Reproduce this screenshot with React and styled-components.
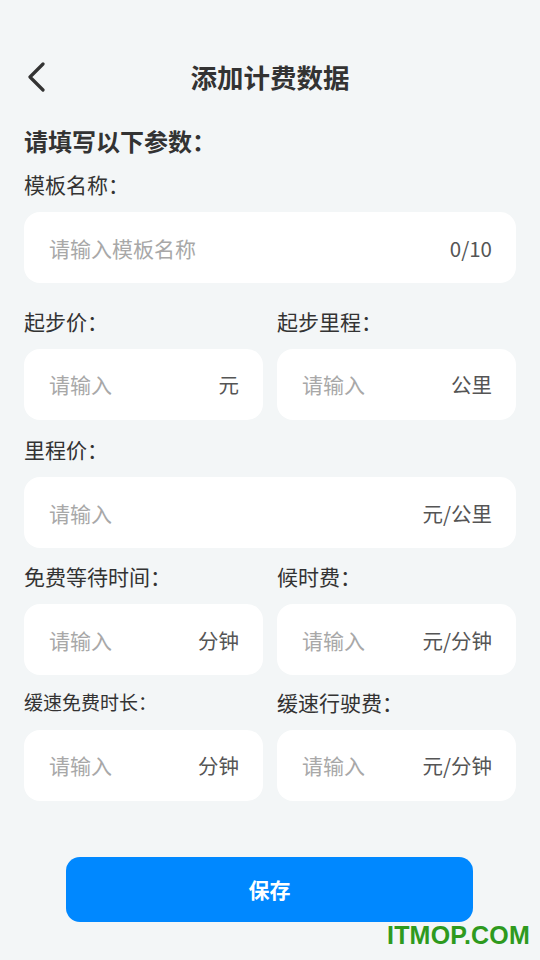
import React from "react";
import styled, { createGlobalStyle } from "styled-components";

const GlobalStyle = createGlobalStyle`
  html, body {
    margin: 0;
    padding: 0;
    background: #f3f6f7;
  }
  body {
    font-family: "Noto Sans CJK SC", "Noto Sans", sans-serif;
    color: #333;
  }
`;

const Page = styled.div`
  position: relative;
  width: 540px;
  height: 960px;
  box-sizing: border-box;
  padding: 49px 24px 0;
  background: #f3f6f7;
  overflow: hidden;
`;

const Header = styled.div`
  display: grid;
  grid-template-columns: 48px 1fr 48px;
  align-items: center;
  height: 56px;
`;

const Back = styled.button`
  display: flex;
  align-items: center;
  padding: 0 0 0 2px;
  border: none;
  background: none;
  cursor: pointer;
`;

const Title = styled.h1`
  margin: 0;
  text-align: center;
  font-size: 26.5px;
  font-weight: 700;
  color: #333;
  line-height: 56px;
`;

const Intro = styled.h2`
  margin: 20px 0 0;
  font-size: 24px;
  line-height: 32px;
  font-weight: 700;
  color: #333;
`;

const Row = styled.div`
  display: grid;
  grid-template-columns: ${(p) => (p.split ? "repeat(2, minmax(0, 1fr))" : "minmax(0, 1fr)")};
  column-gap: 14px;
  margin-top: ${(p) => p.top}px;
`;

const Field = styled.div`
  display: flex;
  flex-direction: column;
  min-width: 0;
`;

const Label = styled.label`
  font-size: ${(p) => (p.small ? 19 : 21)}px;
  line-height: 28px;
  color: #333;
  margin-bottom: 14px;
`;

const Box = styled.div`
  display: flex;
  align-items: center;
  gap: 8px;
  height: 71px;
  box-sizing: border-box;
  padding: 0 24px 0 25px;
  background: #fff;
  border-radius: 16px;
`;

const Input = styled.input`
  flex: 1;
  width: 0;
  min-width: 0;
  border: none;
  outline: none;
  background: transparent;
  padding: 0;
  font-family: inherit;
  font-size: 21px;
  color: #333;
  &::placeholder {
    color: #a8a8a8;
  }
`;

const Unit = styled.span`
  font-size: 20.5px;
  color: #555;
  white-space: nowrap;
`;

const SaveButton = styled.button`
  display: block;
  width: 407px;
  height: 65px;
  margin: 56px 0 0 42px;
  border: none;
  border-radius: 14px;
  background: #0088ff;
  color: #fff;
  font-family: inherit;
  font-size: 21px;
  font-weight: 700;
  cursor: pointer;
`;

const Watermark = styled.div`
  position: absolute;
  right: 10px;
  bottom: 10px;
  font-family: "Liberation Sans", Arial, sans-serif;
  font-size: 25px;
  font-weight: 700;
  color: #2e9a1e;
  letter-spacing: 0.2px;
`;

const fields = [
  { top: 23.5, items: [{ label: "起步价：", unit: "元" }, { label: "起步里程：", unit: "公里" }] },
  { top: 15.5, items: [{ label: "里程价：", unit: "元/公里" }] },
  { top: 14, items: [{ label: "免费等待时间：", unit: "分钟" }, { label: "候时费：", unit: "元/分钟" }] },
  { top: 12.5, items: [{ label: "缓速免费时长：", unit: "分钟", small: true }, { label: "缓速行驶费：", unit: "元/分钟" }] },
];

const InputField = ({ label, unit, placeholder = "请输入", small }) => (
  <Field>
    <Label small={small}>{label}</Label>
    <Box>
      <Input placeholder={placeholder} />
      <Unit>{unit}</Unit>
    </Box>
  </Field>
);

const App = () => {
  return (
    <>
      <GlobalStyle />
      <Page>
        <Header>
          <Back aria-label="返回">
            <svg width="22" height="30" viewBox="0 0 22 30" fill="none">
              <path d="M17 2 L4 15 L17 28" stroke="#333" strokeWidth="3.2" strokeLinecap="round" strokeLinejoin="round" />
            </svg>
          </Back>
          <Title>添加计费数据</Title>
          <span />
        </Header>
        <Intro>请填写以下参数：</Intro>
        <Row top={13}>
          <InputField label="模板名称：" unit="0/10" placeholder="请输入模板名称" />
        </Row>
        {fields.map((row, i) => (
          <Row key={i} top={row.top} split={row.items.length > 1}>
            {row.items.map((f) => (
              <InputField key={f.label} {...f} />
            ))}
          </Row>
        ))}
        <SaveButton>保存</SaveButton>
        <Watermark>ITMOP.COM</Watermark>
      </Page>
    </>
  );
};

export default App;
